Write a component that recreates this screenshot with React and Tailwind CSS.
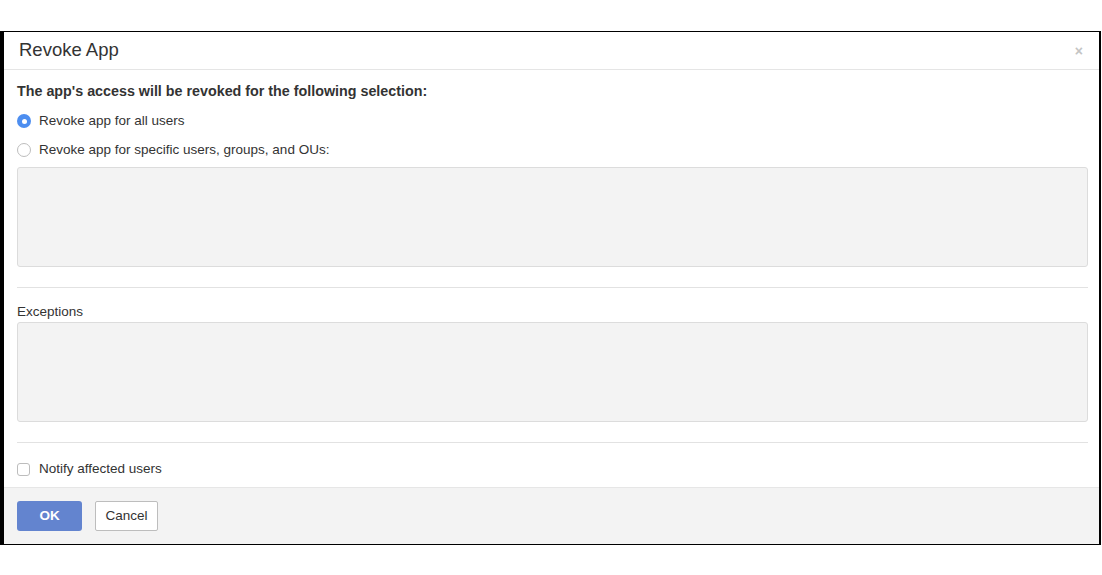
import React from 'react';

const App = () => {
  return (
    <div className="min-h-screen bg-white pt-[31px] font-['Liberation_Sans',Arial,sans-serif] text-[#333]">
      <div className="mr-px h-[514px] border-y border-r-2 border-l-[4px] border-black bg-white flex flex-col">
        {/* header */}
        <div className="flex h-[38px] items-center justify-between border-b border-[#e5e5e5] pl-[15px] pr-[16px]">
          <h2 className="text-[18.5px] leading-none text-[#333]">Revoke App</h2>
          <span className="text-[14px] font-bold leading-none text-[#c4c4c4]">×</span>
        </div>

        {/* body */}
        <div className="flex-1 pl-[13px] pr-[11px] pt-[13px]">
          <p className="text-[14.3px] font-bold leading-[16px]">The app's access will be revoked for the following selection:</p>

          <label className="mt-[14px] flex items-center gap-[8px] text-[13.5px] leading-[16px]">
            <span className="flex h-[14px] w-[14px] items-center justify-center rounded-full bg-[#4d8ef0]">
              <span className="h-[5px] w-[5px] rounded-full bg-white" />
            </span>
            Revoke app for all users
          </label>
          <label className="mt-[13px] flex items-center gap-[8px] text-[13.5px] leading-[16px]">
            <span className="h-[14px] w-[14px] rounded-full border border-[#bdbdbd] bg-white" />
            Revoke app for specific users, groups, and OUs:
          </label>

          <div className="mt-[9px] h-[100px] rounded-[3px] border border-[#dcdcdc] bg-[#f3f3f3]" />

          <div className="mt-[20px] border-t border-[#e2e2e2]" />

          <p className="mt-[16px] text-[13.5px] leading-[16px]">Exceptions</p>
          <div className="mt-[2px] h-[100px] rounded-[3px] border border-[#dcdcdc] bg-[#f3f3f3]" />

          <div className="mt-[20px] border-t border-[#e2e2e2]" />

          <label className="mt-[18px] flex items-center gap-[9px] text-[13.5px] leading-[16px]">
            <span className="h-[13px] w-[13px] rounded-[3px] border border-[#bdbdbd] bg-white" />
            Notify affected users
          </label>
        </div>

        {/* footer */}
        <div className="flex h-[57px] items-center gap-[13px] border-t border-[#e6e6e6] bg-[#f3f3f3] px-[13px]">
          <button className="h-[30px] w-[65px] rounded-[3px] bg-[#6384cf] text-[13.5px] font-bold text-white">OK</button>
          <button className="h-[30px] w-[63px] rounded-[2px] border border-[#bdbdbd] bg-white text-[13.5px] text-[#333]">Cancel</button>
        </div>
      </div>
    </div>
  );
};

export default App;
